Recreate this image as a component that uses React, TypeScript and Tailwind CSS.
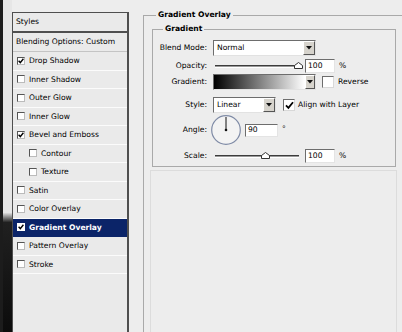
import React from 'react';

const font = { fontFamily: '"DejaVu Sans", Verdana, sans-serif' };

// small sunken checkbox used in the styles list
const SmallCheck = ({ checked, inverted }: { checked?: boolean; inverted?: boolean }) => (
  <span
    className={`w-[8px] h-[8px] shrink-0 border-t border-l border-b border-r ${
      inverted ? 'border-white bg-white' : 'border-t-[#555] border-l-[#555] border-b-[#bbb] border-r-[#bbb] bg-white'
    } flex items-center justify-center`}
  >
    {checked && (
      <svg width="6" height="6" viewBox="0 0 6 6">
        <path d="M0.6 2.8 L2.3 4.6 L5.4 0.8" fill="none" stroke="#000" strokeWidth="1.4" />
      </svg>
    )}
  </span>
);

const BigCheck = ({ checked }: { checked?: boolean }) => (
  <span className="w-[12px] h-[12px] shrink-0 border border-t-[#6d6d6d] border-l-[#6d6d6d] border-b-[#d8d8d8] border-r-[#d8d8d8] bg-white flex items-center justify-center">
    {checked && (
      <svg width="9" height="9" viewBox="0 0 9 9">
        <path d="M1 4.3 L3.4 6.8 L8 1.2" fill="none" stroke="#000" strokeWidth="1.8" />
      </svg>
    )}
  </span>
);

const ArrowButton = ({ w = 12 }: { w?: number }) => (
  <span
    className={`${w === 12 ? 'w-[12px]' : 'w-[10px]'} h-full shrink-0 bg-[#d6d3cc] border border-t-white border-l-white border-b-[#555] border-r-[#555] flex items-center justify-center`}
  >
    <svg width="6" height="4" viewBox="0 0 6 4">
      <path d="M0 0 H6 L3 3.5 Z" fill="#111" />
    </svg>
  </span>
);

const Select = ({ value, className }: { value: string; className: string }) => (
  <div className={`${className} h-full flex bg-white border border-t-[#6d6d6d] border-l-[#6d6d6d] border-b-[#e2e2e2] border-r-[#e2e2e2]`}>
    <span className="flex-1 pl-[3px] flex items-center">{value}</span>
    <ArrowButton />
  </div>
);

const NumberBox = ({ value, className }: { value: string; className: string }) => (
  <div className={`${className} bg-white border border-t-[#6d6d6d] border-l-[#6d6d6d] border-b-[#e4e4e4] border-r-[#e4e4e4] pl-[2px] flex items-center`}>
    {value}
  </div>
);

const Slider = ({ pos }: { pos: number }) => (
  <div className="relative w-[92px] h-full">
    <div className="absolute left-[2px] top-[7px] w-[84px] h-[3px] border-t border-t-[#3c3c3c] border-b border-b-white bg-[#9a9a9a]" />
    <svg className="absolute top-[4px]" style={{ left: pos - 4 }} width="9" height="7" viewBox="0 0 9 7">
      <path d="M0.5 6.5 V3.5 L4.5 0.5 L8.5 3.5 V6.5 Z" fill="#fff" stroke="#333" strokeWidth="1" />
    </svg>
  </div>
);

const styleRows = [
  { label: 'Drop Shadow', checked: true },
  { label: 'Inner Shadow' },
  { label: 'Outer Glow' },
  { label: 'Inner Glow' },
  { label: 'Bevel and Emboss', checked: true },
  { label: 'Contour', sub: true },
  { label: 'Texture', sub: true },
  { label: 'Satin' },
  { label: 'Color Overlay' },
  { label: 'Gradient Overlay', checked: true, active: true },
  { label: 'Pattern Overlay' },
  { label: 'Stroke' },
];

export default function App() {
  return (
    <div className="w-[402px] h-[332px] flex bg-[#ededed] overflow-hidden text-[7.6px] text-black" style={font}>
      {/* window edge */}
      <div className="w-[12px] h-full shrink-0 border-l-[3px] border-[#1c1c1c] bg-[linear-gradient(to_bottom,#e6e6e6_0%,#e6e6e6_64%,#202020_67%,#0c0c0c_100%)]" />

      {/* styles list */}
      <div className="w-[117px] shrink-0 mt-[12px] border-t border-l border-r-2 border-[#4f4f4f] bg-[#eaeaea] flex flex-col">
        <div className="h-[20px] pl-[3px] flex items-center border-b-2 border-[#4f4f4f]">Styles</div>
        <div className="h-[19px] pl-[3px] flex items-center border-b border-[#c4c4c4]">Blending Options: Custom</div>
        {styleRows.map((r) => (
          <div
            key={r.label}
            className={`h-[18.5px] flex items-center gap-[4px] border-b ${
              r.active ? 'bg-[#0b2468] text-white font-bold border-[#0b2468]' : 'border-[#fbfbfb]'
            } ${r.sub ? 'pl-[16px]' : 'pl-[4px]'}`}
          >
            <SmallCheck checked={r.checked} inverted={r.active} />
            <span>{r.label}</span>
          </div>
        ))}
      </div>

      {/* settings */}
      <fieldset className="ml-[14px] mt-[10px] flex-1 min-w-0 border-t border-l border-[#a9a9a9]">
        <legend className="ml-[12px] px-[2px] font-bold leading-[10px]">Gradient Overlay</legend>

        <fieldset className="ml-[8px] mt-[4px] w-[244px] border border-[#a9a9a9] pb-[3px]">
          <legend className="ml-[10px] px-[2px] font-bold leading-[10px]">Gradient</legend>

          <div className="mt-[6px] h-[16px] flex items-center">
            <span className="w-[54px] text-right">Blend Mode:</span>
            <Select value="Normal" className="ml-[6px] w-[103px]" />
          </div>

          <div className="mt-[2px] h-[15px] flex items-center">
            <span className="w-[54px] text-right">Opacity:</span>
            <div className="ml-[6px] h-full">
              <Slider pos={85} />
            </div>
            <NumberBox value="100" className="w-[30px] h-[14px]" />
            <span className="ml-[4px]">%</span>
          </div>

          <div className="mt-[1px] h-[16px] flex items-center">
            <span className="w-[54px] text-right">Gradient:</span>
            <div className="ml-[6px] w-[103px] h-full flex border border-t-[#6d6d6d] border-l-[#6d6d6d] border-b-[#e2e2e2] border-r-[#e2e2e2]">
              <span className="flex-1 bg-[linear-gradient(to_right,#000,#fff)]" />
              <ArrowButton w={10} />
            </div>
            <span className="ml-[6px]">
              <BigCheck />
            </span>
            <span className="ml-[4px]">Reverse</span>
          </div>

          <div className="mt-[7px] h-[16px] flex items-center">
            <span className="w-[54px] text-right">Style:</span>
            <Select value="Linear" className="ml-[6px] w-[63px]" />
            <span className="ml-[7px]">
              <BigCheck checked />
            </span>
            <span className="ml-[3px]">Align with Layer</span>
          </div>

          <div className="mt-[2px] h-[30px] flex items-center">
            <span className="w-[54px] text-right">Angle:</span>
            <svg className="ml-[4px] shrink-0" width="30" height="30" viewBox="0 0 30 30">
              <circle cx="15" cy="15" r="14.3" fill="#f3f3f3" stroke="#7f8ba6" strokeWidth="1.2" />
              <line x1="15" y1="15" x2="15" y2="2" stroke="#111" strokeWidth="1" />
              <circle cx="15" cy="15" r="1.3" fill="#111" />
            </svg>
            <NumberBox value="90" className="ml-[4px] w-[33px] h-[13px]" />
            <span className="ml-[4px] self-start mt-[8px] text-[#222]">°</span>
          </div>

          <div className="mt-[3px] h-[15px] flex items-center">
            <span className="w-[54px] text-right">Scale:</span>
            <div className="ml-[6px] h-full">
              <Slider pos={52} />
            </div>
            <NumberBox value="100" className="w-[30px] h-[14px]" />
            <span className="ml-[4px]">%</span>
          </div>
        </fieldset>

        <div className="ml-[6px] mt-[3px] w-[247px] h-[170px] border border-[#dcdcdc]" />
      </fieldset>
    </div>
  );
}
